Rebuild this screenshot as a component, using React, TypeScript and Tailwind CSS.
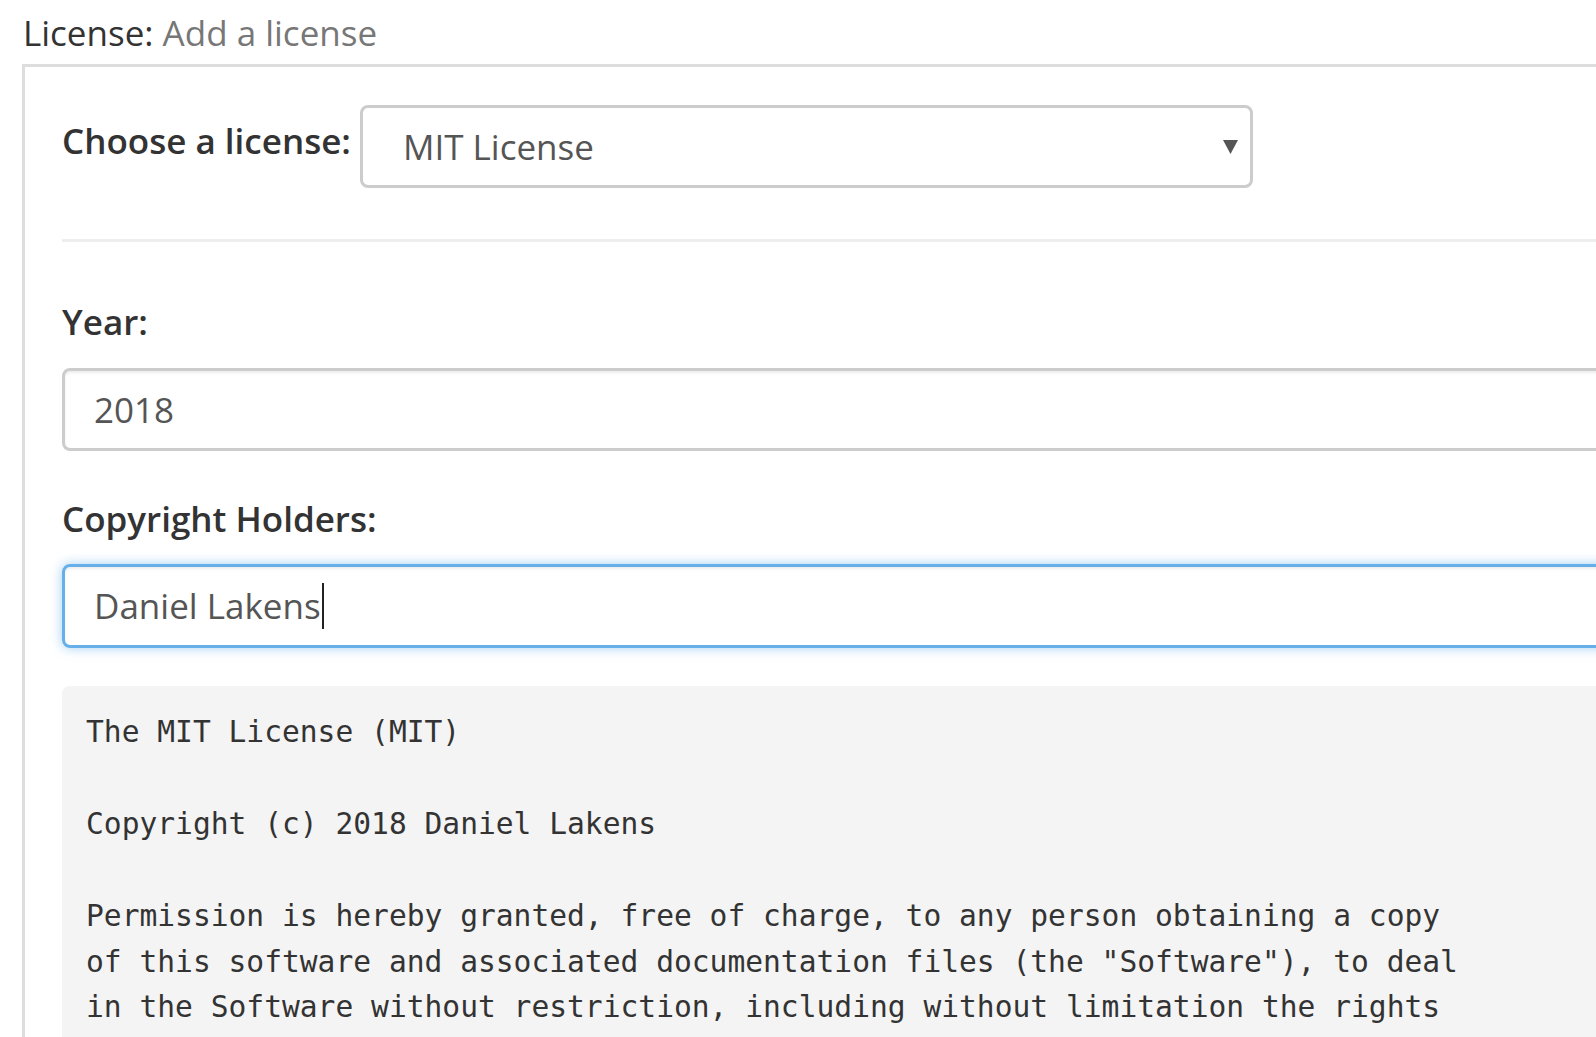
import React from 'react';

const sans = "font-['Open_Sans','Liberation_Sans',sans-serif]";

const licenseText = `The MIT License (MIT)

Copyright (c) 2018 Daniel Lakens

Permission is hereby granted, free of charge, to any person obtaining a copy
of this software and associated documentation files (the "Software"), to deal
in the Software without restriction, including without limitation the rights`;

const FieldLabel: React.FC<{ children: React.ReactNode; className?: string }> = ({ children, className }) => (
  <div className={`text-[35px] leading-[50px] font-semibold text-[#333] ${className ?? ''}`}>{children}</div>
);

export default function App() {
  return (
    <div className={`w-[1596px] h-[1037px] overflow-hidden bg-white ${sans}`}>
      {/* header */}
      <div className="h-[64px] pt-[8px] pl-[23px] text-[35px] leading-[50px] text-[#333] whitespace-nowrap">
        License: <span className="text-[#777]">Add a license</span>
      </div>

      {/* panel */}
      <div className="ml-[22px] w-[1700px] h-[1200px] border-l-[3px] border-t-[3px] border-[#ddd] pl-[37px] pt-[38px]">
        {/* license select */}
        <div className="flex items-start">
          <FieldLabel className="pt-[11px] pr-[9px] whitespace-nowrap">Choose a license:</FieldLabel>
          <div className="relative w-[893px] h-[83px] border-[3px] border-[#ccc] rounded-[8px] bg-white flex items-center pl-[40px]">
            <span className="text-[35px] leading-[50px] text-[#555]">MIT License</span>
            <svg className="absolute right-[12px] top-[31px]" width="15" height="15" viewBox="0 0 15 15">
              <polygon points="0,1 15,1 7.5,15" fill="#555" />
            </svg>
          </div>
        </div>

        <div className="mt-[51px] h-[3px] bg-[#eee]" />

        {/* year */}
        <FieldLabel className="mt-[55px]">Year:</FieldLabel>
        <div className="mt-[21px] h-[83px] border-[3px] border-[#ccc] rounded-[8px] flex items-center pl-[29px] shadow-[inset_0_2px_3px_rgba(0,0,0,0.075)]">
          <span className="text-[35px] leading-[50px] text-[#555]">2018</span>
        </div>

        {/* copyright holders */}
        <FieldLabel className="mt-[43px]">Copyright Holders:</FieldLabel>
        <div className="mt-[20px] h-[84px] border-[3px] border-[#66afe9] rounded-[8px] flex items-center pl-[29px] shadow-[inset_0_2px_3px_rgba(0,0,0,0.075),0_0_12px_rgba(102,175,233,0.6)]">
          <span className="text-[35px] leading-[50px] text-[#555]">Daniel Lakens</span>
          <span className="ml-[1px] w-[2px] h-[46px] bg-[#222]" />
        </div>

        {/* generated license */}
        <pre className="mt-[38px] h-[400px] rounded-[8px] bg-[#f4f4f4] pt-[24px] pl-[24px] font-['DejaVu_Sans_Mono','Liberation_Mono',monospace] text-[29.6px] leading-[45.9px] text-[#333] whitespace-pre">
          {licenseText}
        </pre>
      </div>
    </div>
  );
}
